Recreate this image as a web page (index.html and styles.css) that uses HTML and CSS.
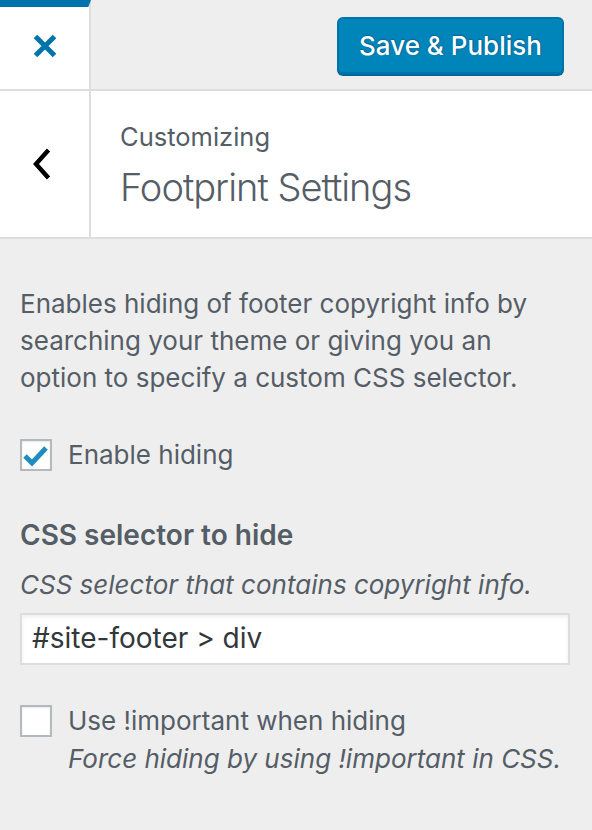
FILE: index.html
```html
<!DOCTYPE html>
<html>
<head>
<meta charset="utf-8">
<link rel="stylesheet" href="styles.css">
</head>
<body>
<div class="panel">
  <div class="topbar">
    <div class="close">
      <svg width="24" height="26" viewBox="0 0 24 26"><path d="M2.5 3.5 L21.5 22.5 M21.5 3.5 L2.5 22.5" stroke="#0073aa" stroke-width="5" fill="none"/></svg>
    </div>
    <div class="actions">
      <button class="publish">Save &amp; Publish</button>
    </div>
  </div>
  <div class="header">
    <div class="back">
      <svg width="20" height="32" viewBox="0 0 20 32"><path d="M16.5 2 L4 16 L16.5 30" stroke="#000" stroke-width="4.4" fill="none"/></svg>
    </div>
    <div class="titles">
      <div class="crumb">Customizing</div>
      <div class="title">Footprint Settings</div>
    </div>
  </div>
  <div class="content">
    <p class="intro">Enables hiding of footer copyright info by searching your theme or giving you an option to specify a custom CSS selector.</p>
    <label class="check">
      <span class="box checked">
        <svg width="26" height="22" viewBox="0 0 26 22"><path d="M2 11 L9 18 L23 3" stroke="#1e8cbe" stroke-width="5" fill="none"/></svg>
      </span>
      <span class="check-text">Enable hiding</span>
    </label>
    <div class="field">
      <div class="field-title">CSS selector to hide</div>
      <div class="field-desc">CSS selector that contains copyright info.</div>
      <div class="input">#site-footer &gt; div</div>
    </div>
    <label class="check check2">
      <span class="box"></span>
      <span class="check-body">
        <span class="check-text">Use !important when hiding</span>
        <span class="check-desc">Force hiding by using !important in CSS.</span>
      </span>
    </label>
  </div>
</div>
</body>
</html>
```
FILE: styles.css
```css
* { box-sizing: border-box; }
html, body { margin: 0; padding: 0; }
body {
  width: 592px;
  height: 830px;
  background: #eeeeee;
  font-family: "Inter", "Noto Sans", sans-serif;
  color: #555d66;
  overflow: hidden;
}
.topbar {
  display: flex;
  height: 91px;
  border-bottom: 2px solid #dddddd;
  background: #eeeeee;
}
.close {
  position: relative;
  width: 91px;
  background: #ffffff;
  border-right: 2px solid #dddddd;
  display: flex;
  align-items: center;
  justify-content: center;
  padding-top: 2px;
}
.close::before {
  content: "";
  position: absolute;
  top: 0;
  left: 0;
  width: 91px;
  height: 7px;
  background: #0073aa;
  clip-path: polygon(0 0, 100% 0, 97% 100%, 0 100%);
}
.actions {
  flex: 1;
  display: flex;
  justify-content: flex-end;
  align-items: flex-start;
  padding: 17px 28px 0 0;
}
.publish {
  font-family: inherit;
  font-size: 26px;
  font-weight: 500;
  color: #ffffff;
  background: #0085ba;
  border: 2px solid #0073aa;
  border-radius: 6px;
  box-shadow: 0 2px 0 #006799;
  text-shadow: 0 -1px 2px #006799, 1px 0 1px #006799;
  height: 57px;
  width: 227px;
  padding: 0;
}
.header {
  display: flex;
  height: 148px;
  background: #ffffff;
  border-bottom: 2px solid #dddddd;
}
.back {
  width: 91px;
  border-right: 2px solid #dddddd;
  display: flex;
  align-items: center;
  justify-content: center;
  padding-right: 6px;
  padding-top: 0;
}
.titles {
  padding: 30px 0 0 29px;
}
.crumb {
  font-size: 25.5px;
  line-height: 32px;
  font-weight: 400;
  color: #555d66;
}
.title {
  font-size: 38px;
  line-height: 52px;
  font-weight: 300;
  color: #555d66;
  margin-top: 8px;
  letter-spacing: -1px;
}
.content {
  padding: 46px 20px 0 20px;
}
.intro {
  margin: 0;
  font-size: 26px;
  line-height: 37px;
  width: 530px;
}
.check {
  display: flex;
  align-items: flex-start;
  gap: 16px;
  margin-top: 43px;
}
.box {
  flex: none;
  width: 32px;
  height: 32px;
  border: 2px solid #b4b9be;
  background: #ffffff;
  box-shadow: inset 0 1px 2px rgba(0,0,0,0.1);
  display: flex;
  align-items: center;
  justify-content: center;
}
.box.checked svg { margin-top: 2px; }
.check-text {
  font-size: 26px;
  line-height: 32px;
}
.field { margin-top: 46px; }
.field-title {
  font-size: 28px;
  font-weight: 600;
  line-height: 36px;
}
.field-desc {
  font-size: 26px;
  font-style: italic;
  line-height: 36px;
  margin-top: 14px;
}
.input {
  margin-top: 10px;
  height: 52px;
  width: 550px;
  background: #ffffff;
  border: 2px solid #dddddd;
  box-shadow: inset 0 2px 4px rgba(0,0,0,0.07);
  font-size: 28px;
  line-height: 46px;
  padding: 0 10px;
  color: #32373c;
}
.check2 { margin-top: 40px; }
.check-body {
  display: flex;
  flex-direction: column;
}
.check-desc {
  font-size: 26px;
  font-style: italic;
  line-height: 38px;
  margin-top: 3px;
}
```
